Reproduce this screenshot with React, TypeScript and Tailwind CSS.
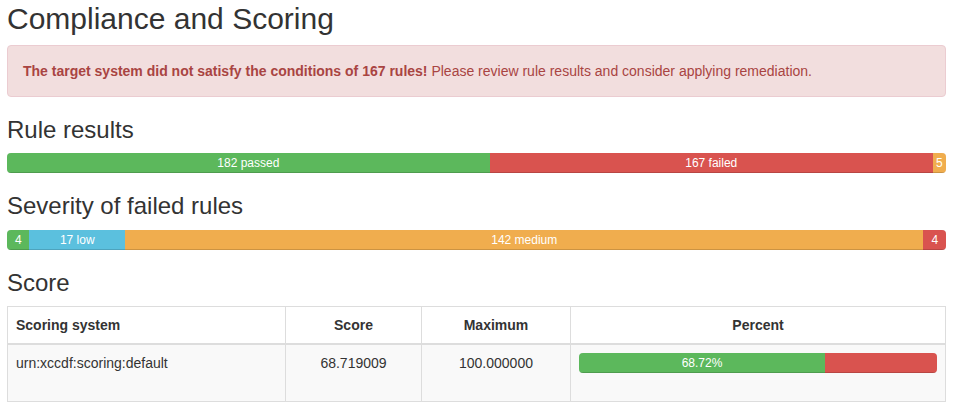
import React from 'react';

interface Segment {
  label: string;
  value: number;
  color: string;
}

const ruleResults: Segment[] = [
  { label: '182 passed', value: 182, color: 'bg-[#5cb85c]' },
  { label: '167 failed', value: 167, color: 'bg-[#d9534f]' },
  { label: '5', value: 5, color: 'bg-[#f0ad4e]' },
];

const severity: Segment[] = [
  { label: '4', value: 4, color: 'bg-[#5cb85c]' },
  { label: '17 low', value: 17, color: 'bg-[#5bc0de]' },
  { label: '142 medium', value: 142, color: 'bg-[#f0ad4e]' },
  { label: '4', value: 4, color: 'bg-[#d9534f]' },
];

const ProgressBar: React.FC<{ segments: Segment[]; className?: string }> = ({ segments, className = '' }) => {
  const total = segments.reduce((s, x) => s + x.value, 0);
  return (
    <div className={`flex h-5 overflow-hidden rounded bg-[#f5f5f5] shadow-[inset_0_1px_2px_rgba(0,0,0,0.1)] ${className}`}>
      {segments.map((seg, i) => (
        <div
          key={i}
          className={`${seg.color} h-full text-center text-xs leading-5 text-white shadow-[inset_0_-1px_0_rgba(0,0,0,0.15)] whitespace-nowrap`}
          style={{ width: `${(seg.value / total) * 100}%` }}
        >
          {seg.label}
        </div>
      ))}
    </div>
  );
};

const App: React.FC = () => {
  return (
    <div className="min-h-screen bg-white pl-[7px] pr-[10px] font-['Liberation_Sans',Arial,sans-serif] text-sm leading-5 text-[#333]">
      <h2 className="mt-[2px] mb-[10px] text-[30px] leading-[33px]">Compliance and Scoring</h2>

      {/* Alert */}
      <div className="mb-5 rounded border border-[#ebccd1] bg-[#f2dede] p-[15px] text-[#a94442]">
        <strong>The target system did not satisfy the conditions of 167 rules!</strong> Please review rule results and
        consider applying remediation.
      </div>

      <h3 className="mb-[10px] text-2xl leading-[26.4px]">Rule results</h3>
      <ProgressBar segments={ruleResults} className="mb-5" />

      <h3 className="mb-[10px] text-2xl leading-[26.4px]">Severity of failed rules</h3>
      <ProgressBar segments={severity} className="mb-5" />

      <h3 className="mb-[10px] text-2xl leading-[26.4px]">Score</h3>
      <table className="w-full border-collapse border border-[#ddd]">
        <thead>
          <tr>
            <th className="w-[278px] border border-b-2 border-[#ddd] p-2 text-left font-bold">Scoring system</th>
            <th className="w-[136px] border border-b-2 border-[#ddd] p-2 text-center font-bold">Score</th>
            <th className="w-[149px] border border-b-2 border-[#ddd] p-2 text-center font-bold">Maximum</th>
            <th className="border border-b-2 border-[#ddd] p-2 text-center font-bold">Percent</th>
          </tr>
        </thead>
        <tbody>
          <tr className="bg-[#f9f9f9]">
            <td className="border border-[#ddd] p-2 align-top">urn:xccdf:scoring:default</td>
            <td className="border border-[#ddd] p-2 text-center align-top">68.719009</td>
            <td className="border border-[#ddd] p-2 text-center align-top">100.000000</td>
            <td className="border border-[#ddd] p-2 align-top">
              <ProgressBar
                className="mb-5"
                segments={[
                  { label: '68.72%', value: 68.72, color: 'bg-[#5cb85c]' },
                  { label: '', value: 31.28, color: 'bg-[#d9534f]' },
                ]}
              />
            </td>
          </tr>
        </tbody>
      </table>
    </div>
  );
};

export default App;
